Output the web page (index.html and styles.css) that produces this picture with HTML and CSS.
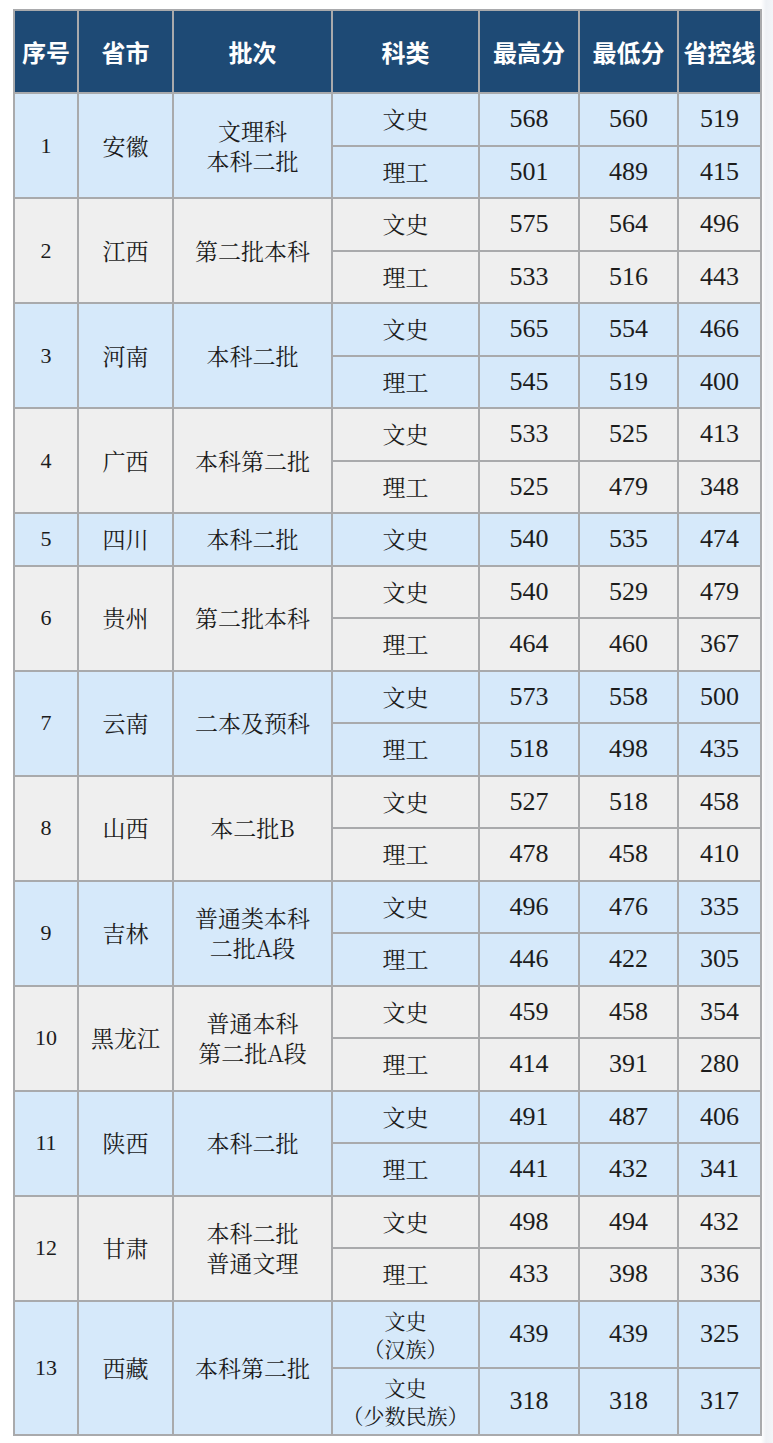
FILE: index.html
```html
<!DOCTYPE html>
<html lang="zh-CN">
<head>
<meta charset="utf-8">
<title>分数线</title>
<link rel="stylesheet" href="styles.css">
</head>
<body>
<div class="page">
<table class="scores">
  <colgroup>
    <col class="c-no"><col class="c-prov"><col class="c-batch"><col class="c-type"><col class="c-num"><col class="c-num2"><col class="c-num3">
  </colgroup>
  <thead>
    <tr class="head">
      <th>序号</th><th>省市</th><th>批次</th><th>科类</th><th>最高分</th><th>最低分</th><th>省控线</th>
    </tr>
  </thead>
  <tbody>
    <tr class="blue"><td rowspan="2" class="no">1</td><td rowspan="2">安徽</td><td rowspan="2" class="ml">文理科<br>本科二批</td><td>文史</td><td class="n">568</td><td class="n">560</td><td class="n">519</td></tr>
    <tr class="blue"><td>理工</td><td class="n">501</td><td class="n">489</td><td class="n">415</td></tr>

    <tr class="grey"><td rowspan="2" class="no">2</td><td rowspan="2">江西</td><td rowspan="2">第二批本科</td><td>文史</td><td class="n">575</td><td class="n">564</td><td class="n">496</td></tr>
    <tr class="grey"><td>理工</td><td class="n">533</td><td class="n">516</td><td class="n">443</td></tr>

    <tr class="blue"><td rowspan="2" class="no">3</td><td rowspan="2">河南</td><td rowspan="2">本科二批</td><td>文史</td><td class="n">565</td><td class="n">554</td><td class="n">466</td></tr>
    <tr class="blue"><td>理工</td><td class="n">545</td><td class="n">519</td><td class="n">400</td></tr>

    <tr class="grey"><td rowspan="2" class="no">4</td><td rowspan="2">广西</td><td rowspan="2">本科第二批</td><td>文史</td><td class="n">533</td><td class="n">525</td><td class="n">413</td></tr>
    <tr class="grey"><td>理工</td><td class="n">525</td><td class="n">479</td><td class="n">348</td></tr>

    <tr class="blue"><td class="no">5</td><td>四川</td><td>本科二批</td><td>文史</td><td class="n">540</td><td class="n">535</td><td class="n">474</td></tr>

    <tr class="grey"><td rowspan="2" class="no">6</td><td rowspan="2">贵州</td><td rowspan="2">第二批本科</td><td>文史</td><td class="n">540</td><td class="n">529</td><td class="n">479</td></tr>
    <tr class="grey"><td>理工</td><td class="n">464</td><td class="n">460</td><td class="n">367</td></tr>

    <tr class="blue"><td rowspan="2" class="no">7</td><td rowspan="2">云南</td><td rowspan="2">二本及预科</td><td>文史</td><td class="n">573</td><td class="n">558</td><td class="n">500</td></tr>
    <tr class="blue"><td>理工</td><td class="n">518</td><td class="n">498</td><td class="n">435</td></tr>

    <tr class="grey"><td rowspan="2" class="no">8</td><td rowspan="2">山西</td><td rowspan="2">本二批B</td><td>文史</td><td class="n">527</td><td class="n">518</td><td class="n">458</td></tr>
    <tr class="grey"><td>理工</td><td class="n">478</td><td class="n">458</td><td class="n">410</td></tr>

    <tr class="blue"><td rowspan="2" class="no">9</td><td rowspan="2">吉林</td><td rowspan="2" class="ml">普通类本科<br>二批A段</td><td>文史</td><td class="n">496</td><td class="n">476</td><td class="n">335</td></tr>
    <tr class="blue"><td>理工</td><td class="n">446</td><td class="n">422</td><td class="n">305</td></tr>

    <tr class="grey"><td rowspan="2" class="no">10</td><td rowspan="2">黑龙江</td><td rowspan="2" class="ml">普通本科<br>第二批A段</td><td>文史</td><td class="n">459</td><td class="n">458</td><td class="n">354</td></tr>
    <tr class="grey"><td>理工</td><td class="n">414</td><td class="n">391</td><td class="n">280</td></tr>

    <tr class="blue"><td rowspan="2" class="no">11</td><td rowspan="2">陕西</td><td rowspan="2">本科二批</td><td>文史</td><td class="n">491</td><td class="n">487</td><td class="n">406</td></tr>
    <tr class="blue"><td>理工</td><td class="n">441</td><td class="n">432</td><td class="n">341</td></tr>

    <tr class="grey"><td rowspan="2" class="no">12</td><td rowspan="2">甘肃</td><td rowspan="2" class="ml">本科二批<br>普通文理</td><td>文史</td><td class="n">498</td><td class="n">494</td><td class="n">432</td></tr>
    <tr class="grey"><td>理工</td><td class="n">433</td><td class="n">398</td><td class="n">336</td></tr>

    <tr class="blue tall"><td rowspan="2" class="no">13</td><td rowspan="2">西藏</td><td rowspan="2">本科第二批</td><td class="ml2"><span class="ln">文史</span><span class="ln">（汉族）</span></td><td class="n">439</td><td class="n">439</td><td class="n">325</td></tr>
    <tr class="blue tall"><td class="ml2"><span class="ln">文史</span><span class="ln">（少数民族）</span></td><td class="n">318</td><td class="n">318</td><td class="n">317</td></tr>
  </tbody>
</table>
</div>
</body>
</html>
```

FILE: styles.css
```css
html, body {
  margin: 0;
  padding: 0;
  background: #ffffff;
}

.page {
  padding: 9px 0 0 13px;
  background: linear-gradient(to right, #ffffff 0, #ffffff 761px, #eef1f5 766px, #f3f5f8 773px);
  min-height: 1443px;
  box-sizing: border-box;
}

.scores {
  border-collapse: collapse;
  table-layout: fixed;
  width: 747px;
  font-family: "Noto Serif CJK SC", "Liberation Serif", "Noto Sans CJK SC", serif;
  color: #1c1c1c;
}

.c-no { width: 64px; }
.c-prov { width: 95px; }
.c-batch { width: 159px; }
.c-type { width: 147px; }
.c-num { width: 100px; }
.c-num2 { width: 99px; }
.c-num3 { width: 83px; }

.scores th,
.scores td {
  border: 2px solid #a9aaac;
  text-align: center;
  vertical-align: middle;
  padding: 0;
}

.head {
  height: 83px;
  background: #1e4a75;
}

.head th {
  color: #ffffff;
  font-family: "Noto Sans CJK SC", "Noto Sans", sans-serif;
  font-weight: 700;
  font-size: 24px;
  white-space: nowrap;
}

.scores tbody tr {
  height: 52.5px;
}

.scores tbody tr.tall {
  height: 67px;
}

.blue { background: #d6e9fa; }
.grey { background: #efefef; }

.scores td {
  font-size: 23px;
  line-height: 30px;
}

.scores td.no {
  font-family: "Liberation Serif", serif;
  font-size: 22px;
}

.scores td.n {
  font-family: "Liberation Serif", serif;
  font-size: 26px;
}

.scores td.ml2 {
  font-size: 21px;
}

.ln {
  display: block;
  line-height: 28px;
}
```
